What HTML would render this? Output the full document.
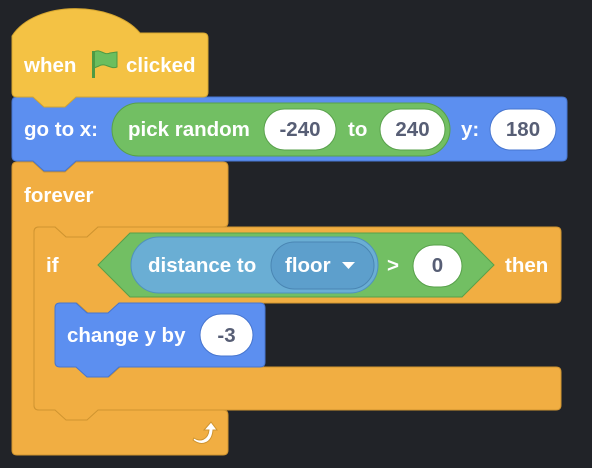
<!DOCTYPE html>
<html><head><meta charset="utf-8"><style>
html,body{margin:0;padding:0;background:#212328;}
svg{display:block}
text{font-family:"Liberation Sans",Arial,sans-serif;font-weight:bold;font-size:20.5px;fill:#fff}
.in{fill:#575E75;text-anchor:middle}
</style></head><body>
<svg width="592" height="468" viewBox="0 0 592 468">
<rect width="592" height="468" fill="#212328"/>
<!-- forever -->
<path d="M12,167 Q12,162 17,162 L33,162 L44,172 L65,172 L76,162 L223,162 Q228,162 228,167 L228,222 Q228,227 223,227 L98,227 L87,237 L66,237 L55,227 L39,227 Q34,227 34,232 L34,405 Q34,410 39,410 L223,410 Q228,410 228,415 L228,450 Q228,455 223,455 L17,455 Q12,455 12,450 Z" fill="#F1AE42" stroke="#CF9430" stroke-width="1"/>
<!-- if -->
<path d="M34,232 Q34,227 39,227 L55,227 L66,237 L87,237 L98,227 L556,227 Q561,227 561,232 L561,298 Q561,303 556,303 L120,303 L109,313 L88,313 L77,303 L61,303 Q56,303 56,308 L56,362 Q56,367 61,367 L77,367 L88,377 L109,377 L120,367 L556,367 Q561,367 561,372 L561,405 Q561,410 556,410 L98,410 L87,420 L66,420 L55,410 L39,410 Q34,410 34,405 Z" fill="#F1AE42" stroke="#CF9430" stroke-width="1"/>
<!-- change y -->
<path d="M55,308 Q55,303 60,303 L76,303 L87,313 L108,313 L119,303 L260,303 Q265,303 265,308 L265,362 Q265,367 260,367 L119,367 L108,377 L87,377 L76,367 L60,367 Q55,367 55,362 Z" fill="#5C8FF0" stroke="#4675CF" stroke-width="1"/>
<!-- goto -->
<path d="M12,102 Q12,97 17,97 L33,97 L44,107 L65,107 L76,97 L562,97 Q567,97 567,102 L567,156 Q567,161 562,161 L76,161 L65,171 L44,171 L33,161 L17,161 Q12,161 12,156 Z" fill="#5C8FF0" stroke="#4675CF" stroke-width="1"/>
<!-- hat -->
<path d="M12,36 C35,0 112,0 140,33 L203,33 Q208,33 208,38 L208,92 Q208,97 203,97 L76,97 L65,107 L44,107 L33,97 L17,97 Q12,97 12,92 Z" fill="#F4C244" stroke="#D4A530" stroke-width="1"/>
<text x="24" y="72">when</text>
<path d="M94,52 C100,48 104,56 110,53 L117,52 L117,67 C111,70 105,62 99,66 L94,68 Z" fill="#6BBE5E" stroke="#4E9A44" stroke-width="1"/>
<rect x="92" y="51" width="3" height="27" fill="#4E9A44"/>
<text x="126" y="72">clicked</text>
<!-- goto content -->
<text x="24" y="136">go to x:</text>
<rect x="112" y="103" width="338" height="53" rx="26.5" fill="#72BF63" stroke="#57A04A"/>
<text x="128" y="136">pick random</text>
<rect x="264" y="109" width="72" height="41" rx="20.5" fill="#fff" stroke="#59A14C"/>
<text class="in" x="300" y="136">-240</text>
<text x="348" y="136">to</text>
<rect x="380" y="109" width="65" height="41" rx="20.5" fill="#fff" stroke="#59A14C"/>
<text class="in" x="412.5" y="136">240</text>
<text x="461" y="136">y:</text>
<rect x="490" y="109" width="66" height="41" rx="20.5" fill="#fff" stroke="#4675CF"/>
<text class="in" x="523" y="136">180</text>
<text x="24" y="202">forever</text>
<!-- if content -->
<text x="46" y="272">if</text>
<path d="M98,265 L130,233 L462,233 L494,265 L462,297 L130,297 Z" fill="#72BF63" stroke="#57A04A"/>
<rect x="131" y="237" width="247" height="56" rx="28" fill="#6AAED4" stroke="#4F91BD"/>
<text x="148" y="272">distance to</text>
<rect x="271" y="242" width="103" height="47" rx="23.5" fill="#5D9FCC" stroke="#4A86B3"/>
<text x="285" y="272">floor</text>
<path d="M342,262 L355,262 L348.5,269 Z" fill="#fff"/>
<text x="387" y="272">&gt;</text>
<rect x="413" y="245" width="49" height="42" rx="21" fill="#fff" stroke="#57A04A"/>
<text class="in" x="437.5" y="272">0</text>
<text x="505" y="272">then</text>
<!-- change -->
<text x="67" y="342">change y by</text>
<rect x="200" y="314" width="53" height="42" rx="21" fill="#fff" stroke="#4675CF"/>
<text class="in" x="226.5" y="342">-3</text>
<!-- loop arrow -->
<path d="M194,438 C200,442 208,440 209,430 L204,430 L211,422 L217,430 L213,430 C212,443 202,447 193,440 Z" fill="#fff" stroke="#CF9430" stroke-width="1"/>
</svg>
</body></html>
